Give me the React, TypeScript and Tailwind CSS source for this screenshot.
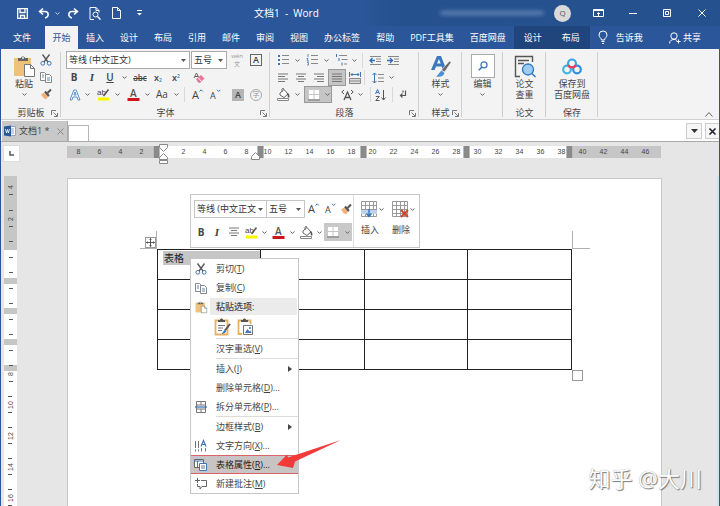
import type { ReactNode } from "react";
import clsx from "clsx";

const tabs = ["插入", "设计", "布局", "引用", "邮件", "审阅", "视图", "办公标签", "帮助", "PDF工具集", "百度网盘"];

const rulerMarks = ["8", "6", "4", "2", "", "2", "4", "6", "8", "10", "12", "14", "16", "18", "20", "22", "24", "26", "28", "30", "32", "34", "36", "38", "40", "42", "44", "46"];

const sideMarks = ["2", "", "", "", "", "8", "10", "12", "14", "16", "18"];

/* ---------- small building blocks ---------- */

function Svg({ w, h, box, children }: { w: number; h: number; box?: string; children: ReactNode }) {
  return (
    <svg width={w} height={h} viewBox={box ?? `0 0 ${w} ${h}`} fill="none" stroke="#555" strokeWidth="1" className="shrink-0 overflow-visible" aria-hidden="true">
      {children}
    </svg>
  );
}

function Tool({ label, className = "w-[18px]", children }: { label: string; className?: string; children: ReactNode }) {
  return (
    <button aria-label={label} className={clsx("flex h-[17px] shrink-0 items-center justify-center", className)}>
      {children}
    </button>
  );
}

function Chevron() {
  return <Svg w={5} h={3}><path d="M.5 .5 2.5 2.3 4.5 .5" stroke="#666" /></Svg>;
}

function Caret({ label, className = "w-[10px]" }: { label: string; className?: string }) {
  return <Tool label={label} className={className}><Chevron /></Tool>;
}

function Sep({ className = "" }: { className?: string }) {
  return <span className={clsx("h-[15px] w-px shrink-0 bg-[#d8d8d8]", className)} />;
}

function Picker({ label, value, className }: { label: string; value: string; className: string }) {
  return (
    <span className={clsx("relative flex h-[18px] shrink-0 items-center border border-[#ababab] bg-white", className)}>
      <select aria-label={label} className="h-full w-full appearance-none bg-transparent pl-[2px] text-[9px] text-[#333] outline-none">
        <option>{value}</option>
      </select>
      <span className="pointer-events-none absolute right-[3px] bg-white">
        <Svg w={5} h={3}><path d="M0 0h5L2.500 3z" fill="#555" stroke="none" /></Svg>
      </span>
    </span>
  );
}

function Group({ label, launcher, className, children }: { label: string; launcher?: boolean; className: string; children: ReactNode }) {
  return (
    <section className={clsx("relative flex shrink-0 flex-col", className)}>
      <div className="flex-1">{children}</div>
      <div className="flex h-[13px] items-center justify-center text-[9px]">{label}</div>
      {launcher && (
        <button aria-label={`${label}设置`} className="absolute bottom-[2px] right-[3px]">
          <Svg w={7} h={7}><path d="M.5 5V.5H5M2.500 2.500 6 6M6.500 3v3.500H3" stroke="#777" /></Svg>
        </button>
      )}
      <span className="absolute bottom-[2px] right-0 top-[1px] w-px bg-[#cfcfcf]" />
    </section>
  );
}

function BigButton({ icon, lines, drop }: { icon: ReactNode; lines: string[]; drop?: boolean }) {
  return (
    <button className="flex flex-col items-center text-[9px] leading-[11px]">
      <span className="flex h-[27px] items-center pt-[3px]">{icon}</span>
      {lines.map((line) => <span key={line} className="whitespace-nowrap">{line}</span>)}
      {drop && <span className="flex h-[11px] items-center"><Chevron /></span>}
    </button>
  );
}

/* ---------- icons ---------- */

const PasteIcon = ({ size = 22 }: { size?: number }) => (
  <Svg w={size} h={size} box="0 0 22 22">
    <path d="M1 3h17v18H1z" fill="#eec27a" stroke="none" />
    <path d="M5 6V3h3c0-2 4-2 4 0h3v3z" fill="#666" stroke="none" />
    <circle cx="10" cy="3" r="1" fill="#f3f3f3" stroke="none" />
    <path d="M11.500 9.500h6l4 4v8h-10zM17.500 9.500v4h4" fill="#fff" stroke="#777" />
  </Svg>
);

const CutIcon = () => (
  <Svg w={12} h={12}>
    <path d="M2.500 .5 8 8M9.500 .5 4 8" stroke="#555" strokeWidth="1.300" />
    <circle cx="2.800" cy="9.300" r="1.900" stroke="#3d74b4" />
    <circle cx="9.200" cy="9.300" r="1.900" stroke="#3d74b4" />
  </Svg>
);

const CopyIcon = () => (
  <Svg w={12} h={12}>
    <path d="M.5 1.500h4l2 2v6h-6z" fill="#fff" stroke="#888" />
    <path d="M5.500 3.500h4l2 2v6h-6z" fill="#fff" stroke="#888" />
    <path d="M7 7h3M7 9h3M2 4h2M2 6h2" stroke="#5b88bd" />
  </Svg>
);

const BrushIcon = () => (
  <Svg w={12} h={12}>
    <path d="M1 6.500 5 4l3.500 4L6 11.500 3.500 10z" fill="#efb27c" stroke="none" />
    <path d="M5 3.500 9 8" stroke="#555" strokeWidth="2" />
    <path d="M7.500 5 11 1.500" stroke="#555" strokeWidth="2" />
  </Svg>
);

const HighlightIcon = () => (
  <Svg w={13} h={13}>
    <text x="0" y="7" fontSize="8" fontFamily="Liberation Sans" fill="#444" stroke="none">ab</text>
    <path d="M6.500 8 11.500 1.500" strokeWidth="1.500" />
    <path d="M1 9.500h11v3H1z" fill="#fdf500" stroke="none" />
  </Svg>
);

const FontColorIcon = () => (
  <Svg w={13} h={13}>
    <text x="3" y="9" fontSize="10" fontFamily="Open Sans" fontWeight="600" fill="#555" stroke="none">A</text>
    <path d="M.5 10h12v3H.5z" fill="#d3131c" stroke="none" />
  </Svg>
);

const BucketIcon = () => (
  <Svg w={13} h={13}>
    <path d="M3 5 7 1.500 11 6 7 9.500 3 7zM5 4V1.500c0-1.500 2-1.500 2 0" fill="#fff" stroke="#666" />
    <path d="M10 5.500c2 1 2 2 1.500 4" stroke="#555" strokeWidth="1.500" />
    <path d="M.5 10.500h11v2H.5z" fill="#fff" stroke="#888" />
  </Svg>
);

const BorderIcon = () => (
  <Svg w={12} h={12}>
    <path d="M1 1h10v9H1z" fill="#fff" stroke="none" />
    <path d="M6 1v9M1 5.500h10" stroke="#c5c5c5" />
    <path d="M.5 0v10M.5 .5H11M11.500 0v10" stroke="#ccc" strokeDasharray="1 1" />
    <path d="M0 11h12" stroke="#777" />
  </Svg>
);

const SizeIcon = ({ up }: { up?: boolean }) => (
  <Svg w={12} h={12}>
    <text x="0" y="10" fontSize={up ? 11 : 9} fontFamily="Open Sans" fill="#444" stroke="none">A</text>
    <path d={up ? "M7.500 2.500 9.200 .8l1.700 1.700" : "M7 .8 8.700 2.500l1.700-1.700"} stroke="#3d74b4" />
  </Svg>
);

const AlignIcon = ({ kind }: { kind: "left" | "center" | "right" | "full" }) => (
  <Svg w={12} h={10}>
    <path
      d={{
        left: "M1 1h10M1 3.500h7M1 6h10M1 8.500h7",
        center: "M1 1h10M3 3.500h6M1 6h10M3 8.500h6",
        right: "M1 1h10M4 3.500h7M1 6h10M4 8.500h7",
        full: "M1 1h10M1 3.500h10M1 6h10M1 8.500h10",
      }[kind]}
      stroke="#777"
    />
  </Svg>
);

const ListIcon = ({ kind }: { kind: "dot" | "num" | "multi" }) => (
  <Svg w={13} h={12}>
    {kind === "dot" && <path d="M1 1h2v2H1zM1 5h2v2H1zM1 9h2v2H1z" fill="#3d74b4" stroke="none" />}
    {kind === "num" && <path d="M2 0v3M.5 4.500H2l-1 2.500h2M1 8.500h1.500V11H1" stroke="#3d74b4" strokeWidth=".8" />}
    {kind === "multi" && <path d="M1.500 0v3M4 4v3M7 8.500v3" stroke="#3d74b4" />}
    <path d={kind === "multi" ? "M4 1.500h8M6.500 5.500h6M9 10h3" : "M5 1.500h7M5 5.500h7M5 9.500h7"} stroke="#888" />
  </Svg>
);

const IndentIcon = ({ out }: { out?: boolean }) => (
  <Svg w={13} h={11}>
    <path d="M1 1.500h11M7 4h5M7 6.500h5M1 9.500h11" stroke="#888" />
    <path d={out ? "M6 5.500H1M3.500 3 1 5.500 3.500 8" : "M0 5.500h5M3 3l2.500 2.500L3 8"} stroke="#2f6eb5" strokeWidth="1.300" />
  </Svg>
);

const GridIcon = ({ remove }: { remove?: boolean }) => (
  <Svg w={17} h={17}>
    <path d="M.5 .5h15v15H.5zM4.500 .5v15M8.500 .5v15M12.500 .5v15M.5 4.500h15M.5 8.500h15M.5 12.500h15" fill="#fff" stroke="#999" />
    {remove ? (
      <path d="m9 9 7 7M16 9l-7 7" stroke="#d04423" strokeWidth="1.800" />
    ) : (
      <>
        <path d="M0 9h16v4H0z" fill="#bcd3ec" stroke="none" />
        <path d="M8 8v7M5.500 12.500 8 15.500l2.500-3" stroke="#2f6eb5" strokeWidth="1.300" />
      </>
    )}
  </Svg>
);

/* ---------- title bar and tabs ---------- */

function TitleBar() {
  return (
    <header className="relative flex h-[26px] shrink-0 items-center bg-gradient-to-r from-[#2b579a] from-50% to-[#26518f] to-55% pl-[14px] text-white">
      <button aria-label="保存" className="flex w-[16px] justify-center">
        <Svg w={11} h={11}><path d="M.7 .7h9.600v9.600H.7zM3 .7v3.800h5V.7M3.500 10.300V7.500h4v2.800" stroke="#fff" strokeWidth="1.300" /></Svg>
      </button>
      <button aria-label="撤消" className="ml-[8px] w-[14px]">
        <Svg w={12} h={12}><path d="M5 1.500 1.500 4.500 5 7.500M2 4.500h5c4 0 4.500 5.500 0 6.500" stroke="#fff" strokeWidth="1.500" /></Svg>
      </button>
      <button aria-label="撤消列表" className="ml-[3px] w-[8px]">
        <Svg w={5} h={3}><path d="M.5 .5 2.500 2.300 4.500 .5" stroke="#c6d4ea" /></Svg>
      </button>
      <button aria-label="重做" className="ml-[4px] w-[14px]">
        <Svg w={12} h={12}><path d="M7 1.500 10.500 4.500 7 7.500M10 4.500H5c-4 0-4.500 5.500 0 6.500" stroke="#fff" strokeWidth="1.500" /></Svg>
      </button>
      <button aria-label="打印预览" className="ml-[8px] w-[14px]">
        <Svg w={12} h={13}>
          <path d="M2 12.500H1V.5h6l3 3v2M7 .5v3h3M1 12.500h4" stroke="#fff" />
          <circle cx="6.500" cy="7.500" r="2.500" stroke="#fff" />
          <path d="m8.500 9.500 3 3" stroke="#fff" strokeWidth="1.500" />
        </Svg>
      </button>
      <button aria-label="新建" className="ml-[9px] w-[12px]">
        <Svg w={9} h={12}><path d="M.5 .5h5l3 3v8h-8zM5.500 .5v3h3" stroke="#fff" /></Svg>
      </button>
      <button aria-label="自定义快速访问工具栏" className="ml-[13px] w-[6px]">
        <Svg w={5} h={6}><path d="M0 .5h5" stroke="#fff" /><path d="M0 3h5L2.500 5.500z" fill="#fff" stroke="none" /></Svg>
      </button>
      <h1 className="ml-[111px] whitespace-pre text-[10px]">文档1  -  Word</h1>

      <div className="ml-auto flex items-center">
        <span className="mr-[10px] h-[4px] w-[104px] rounded-full bg-[#9fb6d8] opacity-50 blur-[2px]" />
        <span className="flex size-[17px] items-center justify-center rounded-full bg-[#dadada] text-[8px] text-[#555]">Q</span>
        <button aria-label="功能区显示选项" className="ml-[20px] flex w-[14px] justify-center">
          <Svg w={11} h={8}><path d="M.5 .5h10v7H.5zM.5 1.500h10M5.500 7V4M4 5l1.500-1.500L7 5" stroke="#fff" /></Svg>
        </button>
        <button aria-label="最小化" className="ml-[20px] flex w-[16px] justify-center">
          <Svg w={8} h={1}><path d="M0 .5h8" stroke="#fff" /></Svg>
        </button>
        <button aria-label="还原" className="ml-[18px] flex w-[16px] justify-center">
          <Svg w={8} h={8}><path d="M.5 .5h7v7h-7zM2.500 2.500h3v3h-3z" stroke="#fff" /></Svg>
        </button>
        <button aria-label="关闭" className="ml-[19px] mr-[10px] flex w-[16px] justify-center">
          <Svg w={8} h={8}><path d="m.5 .5 7 7M7.500 .5l-7 7" stroke="#fff" /></Svg>
        </button>
      </div>
    </header>
  );
}

function TabBar() {
  return (
    <nav className="flex h-[23px] shrink-0 items-stretch whitespace-nowrap bg-[#2b579a] text-[9px] text-white">
      <button className="w-[45px] pr-px">文件</button>
      <button className="w-[33px] bg-[#f3f3f3] text-[#2b579a]">开始</button>
      {tabs.map((tab) => <button key={tab} className="px-[8px]">{tab}</button>)}
      <div className="flex bg-[#20447c]">
        <button className="px-[10px]">设计</button>
        <button className="px-[10px]">布局</button>
      </div>
      <button className="flex items-center pl-[8px]">
        <Svg w={10} h={13}><path d="M3.500 9C3.500 7 1 6.500 1 4a4 4 0 0 1 8 0c0 2.500-2.500 3-2.500 5zM3.500 10.500h3M4 12.500h2" stroke="#fff" /></Svg>
        <span className="ml-[8px]">告诉我</span>
      </button>
      <button className="ml-auto mr-[19px] flex items-center">
        <Svg w={12} h={12}><circle cx="5" cy="4" r="3.200" stroke="#fff" /><path d="M.5 11.500C.5 8.500 3 7.500 5 7.500s2 .5 3 1M9.500 7.500v4M7.500 9.500h4" stroke="#fff" /></Svg>
        <span className="ml-[2px]">共享</span>
      </button>
    </nav>
  );
}

/* ---------- ribbon ---------- */

function Ribbon() {
  return (
    <div className="flex h-[71px] shrink-0 border-b border-[#d0d0d0] bg-[#f3f3f3] pt-[2px] text-[#444]">
      <Group label="剪贴板" launcher className="w-[60px]">
        <div className="flex pl-[12px]">
          <BigButton icon={<PasteIcon />} lines={["粘贴"]} drop />
          <div className="ml-[2px]">
            <Tool label="剪切"><CutIcon /></Tool>
            <Tool label="复制"><CopyIcon /></Tool>
            <Tool label="格式刷"><BrushIcon /></Tool>
          </div>
        </div>
      </Group>

      <Group label="字体" launcher className="w-[209px]">
        <div className="flex h-[18px] items-center pl-[5px]">
          <Picker label="字体" value="等线 (中文正文)" className="w-[124px]" />
          <Picker label="字号" value="五号" className="ml-px w-[36px]" />
          <Tool label="拼音指南" className="w-[20px]">
            <span className="flex flex-col items-center text-[6px] leading-[8px] text-[#999]"><span>wén</span><span>文</span></span>
          </Tool>
          <Tool label="字符边框">
            <span className="flex size-[12px] items-center justify-center border border-[#666] text-[9px] font-semibold leading-[10px]">A</span>
          </Tool>
        </div>
        <div className="flex h-[17px] items-center pl-[4px] text-[10px]">
          <Tool label="加粗"><b>B</b></Tool>
          <Tool label="倾斜"><i className="font-['Liberation_Serif'] text-[11px] font-bold">I</i></Tool>
          <Tool label="下划线"><span className="font-semibold underline">U</span></Tool>
          <Caret label="下划线样式" />
          <Tool label="删除线" className="ml-[2px] w-[18px]"><s className="text-[8px] font-semibold">abc</s></Tool>
          <Tool label="下标"><span className="text-[9px] font-semibold">x<sub className="text-[5px] text-[#3d74b4]">2</sub></span></Tool>
          <Tool label="上标"><span className="text-[9px] font-semibold">x<sup className="text-[5px] text-[#3d74b4]">2</sup></span></Tool>
          <Tool label="清除格式" className="ml-[5px] w-[18px]">
            <Svg w={12} h={12}>
              <path d="M1 6 3.500 1 6 6M2 4.500h3" stroke="#666" />
              <path d="m3 7 5-4 3.500 3.500L7 11 5 10.500z" fill="#e8799a" stroke="none" />
              <path d="m5 5.500 3.500 4" stroke="#fff" />
            </Svg>
          </Tool>
        </div>
        <div className="flex h-[17px] items-center pl-[6px]">
          <Tool label="文本效果" className="w-[16px]">
            <Svg w={12} h={12}><path d="M1 11 4.800 1h2.400L11 11H9L8 8H4l-1 3zM4.800 6h2.400L6 3z" fill="#fff" stroke="#4a86c8" strokeWidth=".9" /></Svg>
          </Tool>
          <Caret label="文本效果列表" className="w-[8px]" />
          <Tool label="突出显示" className="ml-[3px] w-[18px]"><HighlightIcon /></Tool>
          <Caret label="突出显示颜色" />
          <Tool label="字体颜色" className="ml-[2px] w-[18px]"><FontColorIcon /></Tool>
          <Caret label="字体颜色列表" />
          <Tool label="更改大小写" className="w-[20px] text-[10px]">Aa</Tool>
          <Caret label="大小写列表" className="w-[8px]" />
          <Sep className="mx-[4px]" />
          <Tool label="增大字号"><SizeIcon up /></Tool>
          <Tool label="减小字号"><SizeIcon /></Tool>
          <Tool label="字符底纹" className="ml-[4px] w-[18px]">
            <span className="flex size-[12px] items-center justify-center bg-[#b5b5b5] text-[9px] font-semibold leading-[12px]">A</span>
          </Tool>
          <Tool label="带圈字符">
            <span className="flex size-[12px] items-center justify-center rounded-full border border-[#aaa] text-[7px] leading-[10px] text-[#999]">字</span>
          </Tool>
        </div>
      </Group>

      <Group label="段落" launcher className="w-[149px]">
        <div className="flex h-[18px] items-center pl-[4px]">
          <Tool label="项目符号"><ListIcon kind="dot" /></Tool>
          <Caret label="项目符号库" />
          <Tool label="编号" className="ml-px w-[18px]"><ListIcon kind="num" /></Tool>
          <Caret label="编号库" />
          <Tool label="多级列表" className="ml-px w-[18px]"><ListIcon kind="multi" /></Tool>
          <Caret label="多级列表库" className="w-[8px]" />
          <Sep className="ml-[4px] mr-[3px]" />
          <Tool label="减少缩进量"><IndentIcon out /></Tool>
          <Tool label="增加缩进量"><IndentIcon /></Tool>
        </div>
        <div className="flex h-[17px] items-center pl-[4px]">
          <Tool label="左对齐"><AlignIcon kind="left" /></Tool>
          <Tool label="居中"><AlignIcon kind="center" /></Tool>
          <Tool label="右对齐"><AlignIcon kind="right" /></Tool>
          <Tool label="两端对齐" className="w-[18px] border border-[#999] bg-[#c5c5c5]"><AlignIcon kind="full" /></Tool>
          <Tool label="分散对齐">
            <Svg w={12} h={12}>
              <path d="M.5 0v5M11.500 0v5M2 2.500h8M3.500 1 2 2.500 3.500 4M8.500 1 10 2.500 8.500 4" stroke="#3d74b4" />
              <path d="M.5 6.500h11v5H.5zM1 9h10" fill="#ddd" stroke="#888" />
            </Svg>
          </Tool>
          <Sep />
          <Tool label="行距" className="ml-[4px] w-[18px]">
            <Svg w={12} h={12}>
              <path d="M2.500 1v10M.5 3l2-2 2 2M.5 9l2 2 2-2" stroke="#3d74b4" />
              <path d="M6 2.500h6M6 6h6M6 9.500h6" stroke="#888" />
            </Svg>
          </Tool>
          <Caret label="行距选项" className="w-[8px]" />
        </div>
        <div className="flex h-[17px] items-center pl-[4px]">
          <Tool label="底纹"><BucketIcon /></Tool>
          <Caret label="底纹颜色" />
          <button aria-label="边框" className="ml-[2px] flex h-[17px] w-[28px] items-center gap-[5px] border border-[#999] bg-[#c5c5c5] pl-[3px]">
            <BorderIcon /><Chevron />
          </button>
          <Tool label="中文版式" className="ml-[6px] w-[18px]">
            <Svg w={13} h={12}>
              <path d="m3 11 3.500-8L10 11M4.500 8.500h4" stroke="#555" strokeWidth="1.300" />
              <path d="M3 1 .8 3 3 5M10 1l2.200 2L10 5" stroke="#555" />
            </Svg>
          </Tool>
          <Caret label="中文版式列表" className="w-[8px]" />
          <Sep className="ml-[6px] mr-px" />
          <Tool label="排序">
            <Svg w={12} h={12}>
              <path d="M.5 5 2.500 .5 4.500 5M1.300 3.500h2.500" stroke="#3d74b4" />
              <path d="M.8 7.500h3.500l-3.500 4h3.700M8.500 1v10M6.500 8.500l2 2.500 2-2.500" stroke="#555" />
            </Svg>
          </Tool>
          <Sep className="ml-[2px]" />
          <Tool label="显示编辑标记" className="ml-px w-[18px]">
            <Svg w={8} h={9}><path d="M6.500 .5v5H1.500M3.500 3.500l-2 2 2 2M4 .5v2" stroke="#555" strokeWidth="1.200" /></Svg>
          </Tool>
        </div>
      </Group>

      <Group label="样式" launcher className="w-[43px]">
        <div className="flex justify-center">
          <BigButton
            lines={["样式"]}
            drop
            icon={
              <Svg w={22} h={23}>
                <path d="M1 15 7 1h4l5.500 14H13l-1.300-3.500H6L4.600 15zM7 8.500h3.700L8.900 4z" fill="#3d78bc" stroke="none" />
                <path d="M19.500 6 21 7.500 14.500 17l-3-2z" fill="#666" stroke="#f3f3f3" strokeWidth=".6" />
                <path d="M11.500 15.500 14.500 18c-1 4-5 4-8.500 3.500 2-1 3-4 5.500-6z" fill="#4d90d4" stroke="none" />
              </Svg>
            }
          />
        </div>
      </Group>

      <Group label="" className="w-[41px]">
        <div className="flex justify-center">
          <BigButton
            lines={["编辑"]}
            drop
            icon={
              <span className="flex size-[24px] items-center justify-center border border-[#ababab] bg-white">
                <Svg w={10} h={10}><circle cx="6" cy="3.800" r="3" stroke="#3d74b4" strokeWidth="1.300" /><path d="M4 6 .8 9.200" stroke="#3d74b4" strokeWidth="1.600" /></Svg>
              </span>
            }
          />
        </div>
      </Group>

      <Group label="论文" className="w-[43px]">
        <div className="flex justify-center">
          <BigButton
            lines={["论文", "查重"]}
            icon={
              <Svg w={22} h={23}>
                <path d="M6 21.500H1.500v-20h17V7M4 5.500h11M4 8.500h6" stroke="#555" strokeWidth="1.400" />
                <circle cx="14" cy="14.500" r="5.500" fill="#9ecbf2" stroke="#2e78c2" strokeWidth="1.300" />
                <path d="m18 18.500 3.500 3.500" stroke="#2e78c2" strokeWidth="1.500" />
              </Svg>
            }
          />
        </div>
      </Group>

      <Group label="保存" className="w-[52px]">
        <div className="flex justify-center">
          <BigButton
            lines={["保存到", "百度网盘"]}
            icon={
              <Svg w={20} h={17}>
                <circle cx="5" cy="11.500" r="3.800" stroke="#41b5e6" strokeWidth="2.200" />
                <circle cx="15" cy="11.500" r="3.800" stroke="#2e8fe0" strokeWidth="2.200" />
                <circle cx="10" cy="5.500" r="4" stroke="#35a7e8" strokeWidth="2.200" />
                <path d="M6.200 7c.8 2 2.500 2.300 3.800 2.300S13 9 13.800 7" stroke="#e8405a" strokeWidth="2.200" />
              </Svg>
            }
          />
        </div>
      </Group>

      <button aria-label="折叠功能区" className="mb-[2px] ml-auto mr-[6px] self-end">
        <Svg w={8} h={5}><path d="m.5 4.500 3.500-4 3.500 4" stroke="#666" /></Svg>
      </button>
    </div>
  );
}

function DocumentTabs() {
  return (
    <div className="flex h-[22px] shrink-0 items-end border-b border-[#a8a8a8] bg-white pl-px pt-px text-[9px] text-[#444]">
      <div className="flex h-full w-[66px] items-center border-r border-[#aaa] bg-[#c8c8c8] pl-[2px]">
        <Svg w={12} h={12}>
          <path d="M5.500 1.500h6v9h-6zM7 4h3M7 6h3M7 8h3" fill="#fff" stroke="#8aa4cc" />
          <path d="M0 1.500 7 .5v11l-7-1z" fill="#2b579a" stroke="none" />
          <path d="M1.500 4 2.500 8 3.500 4.500 4.500 8 5.500 4" stroke="#fff" strokeWidth=".8" />
        </Svg>
        <span className="ml-[3px] whitespace-pre">文档1 *</span>
        <button aria-label="关闭文档" className="ml-auto mr-[3px]"><Svg w={7} h={7}><path d="m.5 .5 6 6M6.500 .5l-6 6" stroke="#888" /></Svg></button>
      </div>
      <button aria-label="新建标签" className="h-[16px] w-[21px] border border-b-0 border-[#b5b5b5] bg-white" />
      <div className="ml-auto flex gap-[3px] self-center">
        <button aria-label="文档列表" className="flex size-[16px] items-center justify-center border border-[#ccc] bg-[#f6f6f6]">
          <Svg w={7} h={4}><path d="M0 0h7L3.500 4z" fill="#333" stroke="none" /></Svg>
        </button>
        <button aria-label="关闭窗格" className="flex h-[16px] w-[14px] items-center justify-center border border-r-0 border-[#ccc] bg-[#f6f6f6]">
          <Svg w={7} h={7}><path d="m.5 .5 6 6M6.500 .5l-6 6" stroke="#222" strokeWidth="1.600" /></Svg>
        </button>
      </div>
    </div>
  );
}

/* ---------- rulers ---------- */

function ColumnStop({ className }: { className: string }) {
  return <span className={clsx("absolute top-0 h-full w-[7px] border-x border-[#bbb] bg-[#8a8a8a]", className)} />;
}

function TopRuler() {
  return (
    <div className="flex h-[34px] shrink-0 items-start pl-[2px] pt-[2px]">
      <button aria-label="制表符" className="mt-px flex size-[17px] shrink-0 items-center justify-center border border-[#ddd] bg-white">
        <Svg w={5} h={5}><path d="M1 0v4h4" stroke="#555" strokeWidth="1.500" /></Svg>
      </button>
      <div className="relative ml-[47px] mr-[58px] mt-[2px] flex h-[12px] flex-1 items-center bg-white font-['Liberation_Sans'] text-[7px] text-[#444]">
        <span className="absolute left-0 h-full w-[93px] bg-[#c6c6c6]" />
        <span className="absolute right-0 h-full w-[90px] bg-[#c6c6c6]" />
        <div className="relative flex h-full items-center pl-px">
          {rulerMarks.map((mark, i) => <span key={i} className="w-[21px] shrink-0 text-center">{mark}</span>)}
        </div>
        <ColumnStop className="left-[86px]" />
        <ColumnStop className="left-[190px]" />
        <ColumnStop className="left-[293px]" />
        <ColumnStop className="left-[396px]" />
        <ColumnStop className="left-[499px]" />
        <span className="absolute left-[92px] top-[-2px]">
          <Svg w={9} h={21}>
            <path d="M.5 .5h8v3l-4 4-4-4zM4.500 9.500l4 4v2h-8v-2zM.5 16.500h8v3h-8z" fill="#fff" stroke="#888" />
          </Svg>
        </span>
        <span className="absolute left-[184px] top-[6px]">
          <Svg w={9} h={8}><path d="M4.500 .5l4 4v3h-8v-3z" fill="#fff" stroke="#888" /></Svg>
        </span>
      </div>
    </div>
  );
}

function SideRuler() {
  return (
    <div className="relative ml-[3px] w-[13px] shrink-0 bg-white font-['Liberation_Sans'] text-[7px] leading-[8px] text-[#444]">
      <span className="absolute top-0 h-[74px] w-full bg-[#c6c6c6]" />
      <span className="absolute top-[102px] h-[6px] w-full bg-[#c6c6c6]" />
      <span className="absolute top-[132px] h-[6px] w-full bg-[#c6c6c6]" />
      <span className="absolute top-[163px] h-[6px] w-full bg-[#c6c6c6]" />
      <span className="absolute top-[189px] h-[6px] w-full bg-[#c6c6c6]" />
      <div className="relative flex flex-col items-center">
        <div className="flex h-[27px] flex-col items-center pt-[7px]">
          <span className="-rotate-90">4</span>
          <span className="mt-[3px] h-px w-[4px] bg-[#555]" />
        </div>
        {sideMarks.map((mark, i) => (
          <div key={i} className="flex h-[31px] flex-col items-center justify-between py-[7px]">
            <span className="h-px w-[4px] bg-[#555]" />
            <span className="-rotate-90">{mark}</span>
            <span className="h-px w-[4px] bg-[#555]" />
          </div>
        ))}
      </div>
    </div>
  );
}

/* ---------- floating toolbar and context menu ---------- */

function MiniToolbar() {
  return (
    <div className="absolute left-[122px] top-[15px] flex h-[54px] border border-[#c6c6c6] bg-white text-[#444]">
      <div className="pl-[3px] pt-[5px]">
        <div className="flex h-[18px] items-center">
          <Picker label="字体" value="等线 (中文正文" className="w-[73px] border-[#c6c6c6]" />
          <Picker label="字号" value="五号" className="w-[38px] border-l-0 border-[#c6c6c6]" />
          <Tool label="增大字号"><SizeIcon up /></Tool>
          <Tool label="减小字号" className="w-[16px]"><SizeIcon /></Tool>
          <Tool label="格式刷" className="w-[14px]"><BrushIcon /></Tool>
        </div>
        <div className="mt-[5px] flex h-[18px] items-center text-[10px]">
          <Tool label="加粗" className="w-[14px]"><b>B</b></Tool>
          <Tool label="倾斜"><i className="font-['Liberation_Serif'] text-[11px] font-bold">I</i></Tool>
          <Tool label="居中" className="w-[16px]"><AlignIcon kind="center" /></Tool>
          <Tool label="突出显示"><HighlightIcon /></Tool>
          <Caret label="突出显示颜色" className="w-[8px]" />
          <Tool label="字体颜色" className="ml-px w-[18px]"><FontColorIcon /></Tool>
          <Caret label="字体颜色列表" />
          <Tool label="底纹" className="w-[18px]"><BucketIcon /></Tool>
          <Caret label="底纹颜色" className="w-[8px]" />
          <button aria-label="边框" className="ml-px flex h-[18px] w-[28px] items-center gap-[6px] bg-[#c8c8c8] pl-[3px]">
            <BorderIcon /><Chevron />
          </button>
        </div>
      </div>
      <div className="flex gap-[8px] border-l border-[#ddd] pl-[7px] pr-[4px] pt-[6px] text-[9px]">
        <button className="flex flex-col items-start">
          <span className="flex items-center gap-px"><GridIcon /><Chevron /></span>
          <span className="mt-[6px] leading-[11px]">插入</span>
        </button>
        <button className="flex flex-col items-start">
          <span className="flex items-center gap-px"><GridIcon remove /><Chevron /></span>
          <span className="mt-[6px] leading-[11px]">删除</span>
        </button>
      </div>
    </div>
  );
}

type MenuItemProps = { text: string; hotkey: string; more?: boolean; icon?: ReactNode; submenu?: boolean; active?: boolean };

function MenuItem({ text, hotkey, more, icon, submenu, active }: MenuItemProps) {
  return (
    <button
      role="menuitem"
      className={clsx(
        "relative flex h-[19px] w-full items-center whitespace-nowrap border-y text-left",
        active ? "border-[#d9636b] bg-[#c8c4c4] text-[#222]" : "border-transparent",
      )}
    >
      <span className="flex w-[19px] justify-center">{icon}</span>
      <span className="ml-[6px]">{text}(<u>{hotkey}</u>){more && "..."}</span>
      {submenu && (
        <span className="ml-auto mr-[6px]"><Svg w={4} h={6}><path d="M0 0v6l4-3z" fill="#444" stroke="none" /></Svg></span>
      )}
    </button>
  );
}

function MenuLine() {
  return <div className="ml-[25px] h-px bg-[#dcdcdc]" />;
}

function ContextMenu() {
  return (
    <div role="menu" className="absolute left-[122px] top-[79px] w-[109px] border border-[#c6c6c6] bg-white text-[9px] text-[#444]">
      <MenuItem text="剪切" hotkey="T" icon={<CutIcon />} />
      <MenuItem text="复制" hotkey="C" icon={<CopyIcon />} />
      <div className="flex h-[19px] items-center">
        <span className="flex w-[19px] justify-center"><PasteIcon size={12} /></span>
        <span className="mr-px flex h-[17px] flex-1 items-center bg-[#ebebeb] pl-[6px] font-medium">粘贴选项:</span>
      </div>
      <div className="flex h-[22px] items-center gap-[6px] pl-[23px]">
        <button aria-label="保留源格式">
          <Svg w={17} h={18}>
            <path d="M1.500 2.500h12v14h-12z" fill="#fff" stroke="#e6b163" strokeWidth="1.800" />
            <path d="M4 4V2h2c0-2 3-2 3 0h2v2z" fill="#555" stroke="none" />
            <path d="M4 7.500h7M4 10h5M4 12.500h4" stroke="#777" />
            <path d="m16 6-5 6.500" stroke="#555" strokeWidth="2" />
            <path d="M11 11.500c2 1 1.500 4-3.500 4.500 1.500-1 1.500-3 3.500-4.500z" fill="#3d78bc" stroke="none" />
          </Svg>
        </button>
        <button aria-label="图片">
          <Svg w={17} h={18}>
            <path d="M5 16H1.500V2.500h12V6" stroke="#e6b163" strokeWidth="1.800" />
            <path d="M4 4V2h2c0-2 3-2 3 0h2v2z" fill="#555" stroke="none" />
            <path d="M6.500 7.500h9v9h-9z" fill="#fff" stroke="#777" />
            <path d="m8 15 2.500-4 2 2.500 1-1 1 2.500z" fill="#3d78bc" stroke="none" />
            <circle cx="13" cy="10" r="1" fill="#3d78bc" stroke="none" />
          </Svg>
        </button>
      </div>
      <MenuLine />
      <MenuItem text="汉字重选" hotkey="V" />
      <MenuLine />
      <MenuItem text="插入" hotkey="I" submenu />
      <MenuItem text="删除单元格" hotkey="D" more />
      <MenuItem
        text="拆分单元格"
        hotkey="P"
        more
        icon={
          <Svg w={12} h={12}>
            <path d="M1.500 .5h9v11h-9zM6 .5V4M6 8v3.500M1.500 4h9M1.500 8h9" stroke="#777" />
            <path d="M0 6h12" stroke="#3d74b4" strokeWidth="1.300" />
          </Svg>
        }
      />
      <MenuLine />
      <MenuItem text="边框样式" hotkey="B" submenu />
      <MenuItem
        text="文字方向"
        hotkey="X"
        more
        icon={
          <Svg w={12} h={12}>
            <path d="M.5 1v7M3.500 1v7M.5 9.500v2M3.500 9.500v2M6.500 8v3.500M10.500 8v3.500" stroke="#777" />
            <path d="M6 6.500 8.500 .5l2.500 6M7 4.500h3" stroke="#3d74b4" strokeWidth="1.200" />
          </Svg>
        }
      />
      <MenuItem
        text="表格属性"
        hotkey="R"
        more
        active
        icon={
          <Svg w={13} h={12}>
            <path d="M.5 .5h9v8h-9z" fill="#fff" stroke="#666" />
            <path d="M.5 2h9M3.500 2v6" stroke="#3d74b4" />
            <path d="M5.500 4.500h7v7h-7z" fill="#fff" stroke="#3d74b4" />
            <path d="M7 7h4M7 9h4" stroke="#777" />
          </Svg>
        }
      />
      <MenuItem
        text="新建批注"
        hotkey="M"
        icon={<Svg w={12} h={12}><path d="M6 2.500h5.500v6H7l-2 2.500V8.500H2.500V6M2.500 0v5M0 2.500h5" stroke="#666" /></Svg>}
      />
    </div>
  );
}

/* ---------- page ---------- */

function Page() {
  return (
    <div className="relative ml-[50px] mr-[55px] mt-[2px] flex-1 border-x border-t border-[#c9c9c9] bg-white">
      <div className="relative ml-[15%] mt-[70px] w-[70%]">
        <table className="w-full table-fixed border-collapse text-[10px] text-[#222]">
          <tbody>
            {[0, 1, 2, 3].map((row) => (
              <tr key={row} className="h-[30px]">
                {[0, 1, 2, 3].map((col) => (
                  <td key={col} className="border border-[#222] p-0 pl-[5px] align-top">
                    {row === 0 && col === 0 && <span className="mt-px block h-[14px] bg-[#c6c6c6] pl-px leading-[14px]">表格</span>}
                  </td>
                ))}
              </tr>
            ))}
          </tbody>
        </table>
        <button aria-label="移动表格" className="absolute left-[-12px] top-[-12px] flex size-[11px] items-center justify-center border border-[#999] bg-white">
          <Svg w={9} h={9}><path d="M4.500 .5v8M.5 4.500h8M3.500 1.500l1-1 1 1M3.500 7.500l1 1 1-1M1.500 3.500l-1 1 1 1M7.500 3.500l1 1-1 1" stroke="#444" strokeWidth=".9" /></Svg>
        </button>
        <span className="absolute left-[-17px] top-[-18px] h-[18px] w-[17px] border-b border-r border-[#b0b0b0]" />
        <span className="absolute right-[-18px] top-[-18px] h-[18px] w-[18px] border-b border-l border-[#b0b0b0]" />
        <span className="absolute bottom-[-11px] right-[-11px] size-[11px] border border-[#999] bg-white" />
      </div>
      <MiniToolbar />
      <ContextMenu />
      <span className="absolute left-[209px] top-[260px]">
        <Svg w={65} h={30}><path d="M0 26 10 15.500 11 18.500 64 1 18 22.500 16 29z" fill="#f23a3a" stroke="none" /></Svg>
      </span>
    </div>
  );
}

export default function App() {
  return (
    <div className="relative flex h-screen flex-col overflow-hidden bg-[#e6e6e6] font-['Open_Sans','Noto_Sans_CJK_SC',sans-serif]">
      <TitleBar />
      <TabBar />
      <div className="flex min-h-0 flex-1 flex-col border-x border-[#2b579a]">
        <Ribbon />
        <DocumentTabs />
        <TopRuler />
        <main className="flex min-h-0 flex-1 border-r-2 border-[#d3e0ee]">
          <SideRuler />
          <Page />
        </main>
      </div>
      <p className="absolute bottom-[13px] right-[18px] text-[22px] leading-[30px] text-white [text-shadow:1px_1px_1px_#777,0_0_1px_#999]">知乎 @大川</p>
    </div>
  );
}
